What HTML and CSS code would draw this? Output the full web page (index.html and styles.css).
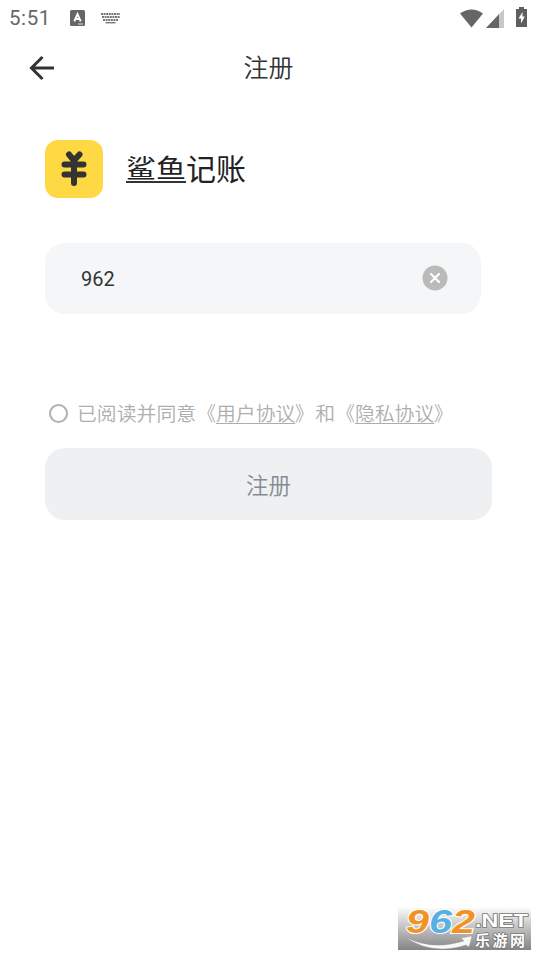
FILE: index.html
```
<!DOCTYPE html>
<html lang="zh-CN">
<head>
<meta charset="utf-8">
<meta name="viewport" content="width=device-width, initial-scale=1">
<title>注册</title>
<link rel="stylesheet" href="styles.css">
</head>
<body>
<div class="status">
  <span class="time">5:51</span>
  <svg class="ime" width="15" height="16" viewBox="0 0 15 16"><rect width="15" height="16" rx="1.500" fill="#666"/><path d="M4.300 11.300 7.500 4l3.200 7.300M5.500 9h4" fill="none" stroke="#fff" stroke-width="1.900"/><path d="M8 14h5" stroke="#ddd" stroke-width="1"/></svg>
  <svg class="keys" width="19" height="11" viewBox="0 0 19 11"><g fill="none" stroke="#777" stroke-width="1.900"><path d="M0 1h19M1 4h18M2 7h15" stroke-dasharray="2 .6"/><path d="M4.500 9.700h10" stroke-width="1.400"/></g></svg>
  <span class="spacer"></span>
  <svg class="wifi" width="23" height="19" viewBox="0 0 23 19"><path d="M0 4.500Q11.500-3.500 23 4.500L11.500 18.500Z" fill="#666"/></svg>
  <svg class="signal" width="18" height="19" viewBox="0 0 18 19"><path d="M18 0V19H0Z" fill="#c8c8c8"/><path d="M13 5.300V19H0Z" fill="#666"/></svg>
  <svg class="battery" width="11" height="20" viewBox="0 0 11 20"><path d="M3 0h5v2h3v18H0V2h3Z" fill="#5f5f5f"/><path d="M6.500 5 2.500 11.500H5V16.500L8.800 9.500H6.500Z" fill="#fff"/></svg>
</div>
<header class="bar">
  <svg class="back" width="26" height="26" viewBox="0 0 26 26"><path d="M13.500 2 2.500 13l11 11M2.500 13H25" fill="none" stroke="#333" stroke-width="3"/></svg>
  <h1>注册</h1>
</header>
<main>
  <div class="brand">
    <div class="logo"><svg width="58" height="58" viewBox="0 0 58 58"><path d="M24 14.500 29 20.500 34.500 14.500M19.500 24.500H38.500M19.500 34.500H38.500M29 21V43" fill="none" stroke="#333" stroke-width="6" stroke-linecap="round" stroke-linejoin="round"/></svg></div>
    <div class="name"><div class="under"><span>鲨鱼</span></div><div class="rest">记账</div></div>
  </div>
  <div class="field">
    <span>962</span>
    <svg width="26" height="26" viewBox="0 0 26 26"><circle cx="13" cy="13" r="12.500" fill="#bababa"/><path d="m9 9 8 8m0-8-8 8" stroke="#fff" stroke-width="2.200" stroke-linecap="round"/></svg>
  </div>
  <div class="agree"><i></i><p>已阅读并同意<span class="open">《</span><u>用户协议</u><span class="close">》</span>和<span class="open">《</span><u>隐私协议</u><span class="close">》</span></p></div>
  <div class="submit">注册</div>
</main>
<div class="mark">
  <svg width="133" height="42" viewBox="0 0 133 42">
    <path d="M7 29Q34 43 66 33L63 30 74 28 71 39 68 37Q34 48 7 29Z" fill="#f8f8f8" stroke="#999" stroke-width=".4"/>
    <g class="digits"><text x="8" y="25" textLength="23" lengthAdjust="spacingAndGlyphs" fill="#f29225">9</text><text x="31" y="25" textLength="23" lengthAdjust="spacingAndGlyphs" fill="#56b0e5">6</text><text x="54" y="25" textLength="23" lengthAdjust="spacingAndGlyphs" fill="#f29225">2</text></g>
    <text class="net" x="77" y="19" textLength="53" lengthAdjust="spacingAndGlyphs">.NET</text>
    <text class="site" x="77" y="38" textLength="50">乐游网</text>
  </svg>
</div>
</body>
</html>
```
FILE: styles.css
```
* { box-sizing: border-box; }
body {
  margin: 0;
  height: 956px;
  display: flex;
  flex-direction: column;
  overflow: hidden;
  background: #fff;
  color: #333;
  font-family: Roboto, "Noto Sans CJK SC", sans-serif;
}
svg { display: block; flex: none; overflow: visible; }
.status {
  height: 36px;
  display: flex;
  align-items: center;
  padding: 0 10px 0 9px;
}
.time { width: 61px; font-size: 20.500px; letter-spacing: .6px; color: #666; line-height: 36px; }
.keys { margin-left: 16px; }
.spacer { flex: 1; }
.wifi { margin-right: 3px; }
.signal { margin-right: 12px; }
.battery { margin-top: -2px; }
.bar {
  height: 64px;
  display: grid;
  grid-template-columns: 58px 1fr 58px;
  align-items: center;
}
.back { margin-left: 29px; }
h1 { margin: 0; font: 350 25px/36px "Noto Sans CJK SC", sans-serif; text-align: center; padding-bottom: 5px; }
main { padding: 40px 45px 0; }
.brand { display: flex; align-items: center; height: 58px; }
.logo { width: 58px; height: 58px; border-radius: 13px; background: #ffd943; }
.name {
  display: flex;
  align-items: flex-start;
  height: 30px;
  margin-left: 23px;
  font: 400 30px/30px "Noto Sans CJK SC", sans-serif;
  color: #222;
}
.under { height: 29px; border-bottom: 2px solid #333; }
.under span { display: block; transform: scaleY(.87); transform-origin: 0 0; }
.rest { line-height: 27px; }
.field {
  margin-top: 45px;
  width: 436px;
  height: 71px;
  padding: 0 33px 0 36px;
  border-radius: 20px;
  background: #f5f6f8;
  display: flex;
  align-items: center;
  justify-content: space-between;
  font-size: 20px;
}
.field svg { margin-bottom: 2px; }
.agree {
  margin-top: 84px;
  padding-left: 4px;
  height: 30px;
  display: flex;
  align-items: center;
  color: #aeaeae;
}
.agree i { width: 19px; height: 19px; border: 2px solid #b2b2b2; border-radius: 50%; }
.agree p {
  margin: 0 0 0 9px;
  font: 350 19.850px/30px "Noto Sans CJK SC", sans-serif;
  white-space: nowrap;
}
.open, .close { display: inline-block; transform: scaleX(.93); }
.open { transform-origin: 100% 50%; }
.close { transform-origin: 0 50%; }
.agree u { text-decoration-thickness: 1px; text-underline-offset: 2px; }
.submit {
  margin-top: 20px;
  height: 72px;
  border-radius: 20px;
  background: #eff0f2;
  color: #868b91;
  font: 350 22.500px/72px "Noto Sans CJK SC", sans-serif;
  text-align: center;
}
.mark {
  width: 133px;
  height: 42px;
  margin: auto 6px 6px auto;
  background: linear-gradient(#fafafa, #b8b8b8 55%, #858585);
}
.digits {
  font: italic 700 33px "Liberation Sans", sans-serif;
  stroke: #fff;
  stroke-width: 2px;
  paint-order: stroke;
}
.net, .site { fill: #fff; stroke: #777; stroke-width: 1.500px; paint-order: stroke; }
.net { font: 700 19px "Liberation Sans", sans-serif; }
.site { font: 700 15px "Noto Sans CJK SC", sans-serif; }
```
